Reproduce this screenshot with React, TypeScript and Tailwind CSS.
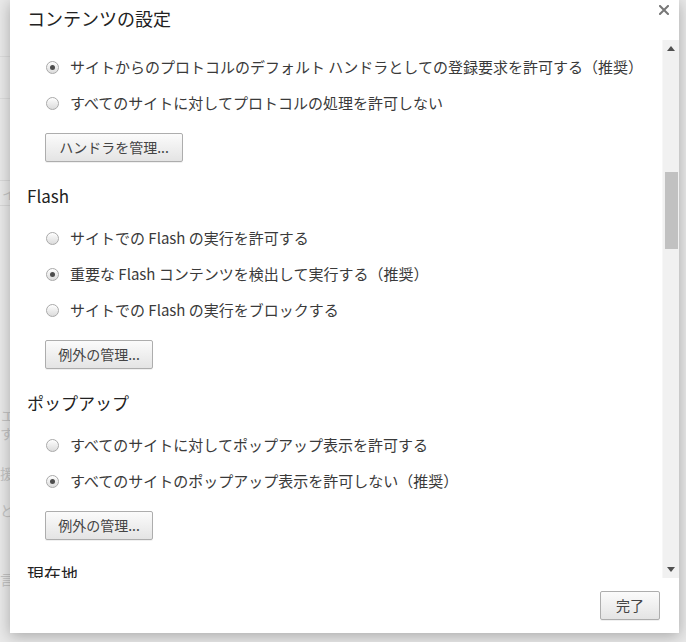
import React from "react";

const font = { fontFamily: '"Noto Sans CJK JP", "Noto Sans", sans-serif' };

function Radio({ checked }: { checked?: boolean }) {
  return (
    <span className="flex h-[13px] w-[13px] items-center justify-center rounded-full border border-[#a9a9a9] bg-gradient-to-b from-[#fdfdfd] to-[#dcdcdc] shadow-[inset_0_1px_1px_rgba(255,255,255,0.8)]">
      {checked && <span className="h-[5px] w-[5px] rounded-full bg-[#4d4d4d]" />}
    </span>
  );
}

function Option({ label, checked }: { label: string; checked?: boolean }) {
  return (
    <div className="flex h-[36px] items-center pl-[36px]">
      <Radio checked={checked} />
      <span className="ml-[11px] text-[15px] text-[#3a3a3a]">{label}</span>
    </div>
  );
}

function Btn({ label, w }: { label: string; w: string }) {
  return (
    <button
      className={`${w} h-[29px] rounded-[2px] border border-[#adadad] bg-gradient-to-b from-[#fbfbfb] to-[#e4e4e4] text-[14px] text-[#444] shadow-[0_1px_0_rgba(0,0,0,0.06)]`}
    >
      {label}
    </button>
  );
}

function Heading({ text }: { text: string }) {
  return (
    <div className="mt-[19px] flex h-[30px] items-center pl-[17px] text-[17px] text-[#222]">
      {text}
    </div>
  );
}

export default function App() {
  return (
    <div className="relative h-[642px] w-[686px] overflow-hidden bg-[#e9e9e9]" style={font}>
      {/* page behind the dialog */}
      <div className="flex flex-col text-[14px] leading-[18px] text-[#c4c4c4]">
        <div className="mt-[56px] h-px w-[10px] bg-[#dcdcdc]" />
        <div className="mt-[41px] h-px w-[10px] bg-[#dcdcdc]" />
        <div className="mt-[81px] flex h-[26px] w-[12px] items-center overflow-hidden border-y border-[#d8d8d8] pl-[2px]">イ</div>
        <div className="mt-[200px] h-[18px] overflow-hidden pl-[1px]">エ</div>
        <div className="h-[18px] overflow-hidden">す</div>
        <div className="mt-[22px] h-[18px] overflow-hidden">援</div>
        <div className="mt-[19px] h-[18px] overflow-hidden">とネ</div>
        <div className="mt-[51px] h-[18px] overflow-hidden">言</div>
      </div>

      {/* dialog */}
      <div className="absolute left-[10px] top-0 flex h-[633px] w-[669px] flex-col bg-white shadow-[0_3px_14px_rgba(0,0,0,0.28)]">
        <div className="relative flex h-[40px] items-center pl-[17px] pb-[3px] text-[18px] text-[#222]">
          コンテンツの設定
          <svg className="absolute right-[10px] top-[5px]" width="10" height="10" viewBox="0 0 10 10">
            <path d="M1 1L9 9M9 1L1 9" stroke="#777" strokeWidth="2" strokeLinecap="square" />
          </svg>
        </div>

        <div className="flex h-[538px]">
          <div className="flex-1 overflow-hidden pt-[9px]">
            <Option checked label="サイトからのプロトコルのデフォルト ハンドラとしての登録要求を許可する（推奨）" />
            <Option label="すべてのサイトに対してプロトコルの処理を許可しない" />
            <div className="mt-[12px] pl-[35px]">
              <Btn w="w-[138px]" label="ハンドラを管理..." />
            </div>

            <Heading text="Flash" />
            <div className="mt-[9px]">
              <Option label="サイトでの Flash の実行を許可する" />
              <Option checked label="重要な Flash コンテンツを検出して実行する（推奨）" />
              <Option label="サイトでの Flash の実行をブロックする" />
            </div>
            <div className="mt-[12px] pl-[35px]">
              <Btn w="w-[108px]" label="例外の管理..." />
            </div>

            <Heading text="ポップアップ" />
            <div className="mt-[9px]">
              <Option label="すべてのサイトに対してポップアップ表示を許可する" />
              <Option checked label="すべてのサイトのポップアップ表示を許可しない（推奨）" />
            </div>
            <div className="mt-[12px] pl-[35px]">
              <Btn w="w-[108px]" label="例外の管理..." />
            </div>

            <Heading text="現在地" />
          </div>

          {/* scrollbar */}
          <div className="flex w-[17px] flex-col items-center border-l border-[#f7f7f7] bg-[#f1f1f1]">
            <div className="flex h-[17px] w-full items-center justify-center">
              <svg width="8" height="5" viewBox="0 0 8 5">
                <path d="M4 0L8 5H0Z" fill="#505050" />
              </svg>
            </div>
            <div className="mt-[115px] h-[77px] w-[13px] bg-[#c1c1c1]" />
            <div className="flex-1" />
            <div className="flex h-[17px] w-full items-center justify-center">
              <svg width="8" height="5" viewBox="0 0 8 5">
                <path d="M0 0H8L4 5Z" fill="#505050" />
              </svg>
            </div>
          </div>
        </div>

        <div className="flex flex-1 items-start justify-end pr-[19px] pt-[13px]">
          <Btn w="w-[60px]" label="完了" />
        </div>
      </div>
    </div>
  );
}
